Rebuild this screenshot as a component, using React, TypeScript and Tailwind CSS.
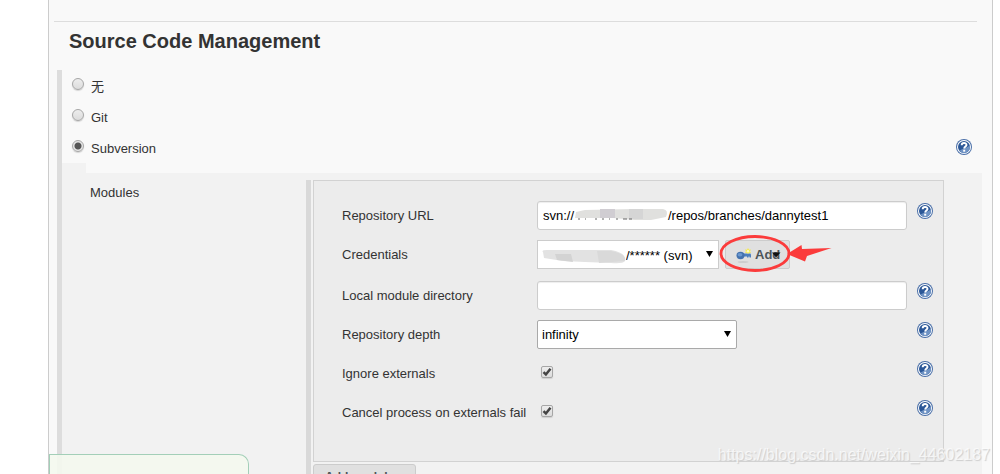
import type { ReactNode } from "react";

function Help({ topic }: { topic: string }) {
  return (
    <button type="button" aria-label={`Help for ${topic}`} className="size-4 shrink-0">
      <svg viewBox="0 0 16 16" className="size-4">
        <circle cx="8" cy="8" r="8" fill="#4a6fa8" />
        <circle cx="8" cy="8" r="7" fill="#fff" />
        <circle cx="8" cy="8" r="6" fill="#2b5797" />
        <path d="M3.4 11.800A6 6 0 0 0 13.700 6C12 9 8 8.500 3.400 11.800Z" fill="#6f93c4" />
        <path
          d="M5.700 6.300C5.700 3.300 10.500 3.300 10.500 6C10.500 7.700 8.200 7.500 8.200 9.600"
          fill="none"
          stroke="#fff"
          strokeWidth="1.900"
        />
        <rect x="7.200" y="10.700" width="2" height="2" fill="#fff" />
      </svg>
    </button>
  );
}

function Scm({ id, label, checked = false }: { id: string; label: string; checked?: boolean }) {
  return (
    <div className="flex items-start h-[31px]">
      <input
        type="radio"
        name="scm"
        id={id}
        defaultChecked={checked}
        className="appearance-none size-3 rounded-full border border-[#a6a6a6] bg-linear-to-b from-[#ededed] to-[#dcdcdc] shadow-[0_1px_1px_#d4d4d4] checked:bg-[radial-gradient(circle,#555_0_3px,#e6e6e6_4px)]"
      />
      <label htmlFor={id} className="ml-[7px] leading-[18px]">
        {label}
      </label>
    </div>
  );
}

function Row({ id, label, help = true, children }: { id: string; label: string; help?: boolean; children: ReactNode }) {
  return (
    <div className="grid grid-cols-[185px_1fr_16px] gap-x-2.5 items-start">
      <label htmlFor={id} className="leading-[29px] whitespace-nowrap">
        {label}
      </label>
      <div className="flex items-start min-h-[29px]">{children}</div>
      <div className="flex pt-0.5">{help && <Help topic={label} />}</div>
    </div>
  );
}

function Check({ id }: { id: string }) {
  return (
    <span className="relative flex ml-1 mt-[7px]">
      <input
        type="checkbox"
        id={id}
        defaultChecked
        className="peer appearance-none size-3 rounded-xs border border-[#a6a6a6] bg-linear-to-b from-[#ededed] to-[#dcdcdc] shadow-[0_1px_1px_#d0d0d0]"
      />
      <svg viewBox="0 0 12 12" className="absolute inset-0 size-3 pointer-events-none hidden peer-checked:block">
        <path d="M2.500 6.200L4.900 8.500L9.500 2.800" fill="none" stroke="#444" strokeWidth="2.500" />
      </svg>
    </span>
  );
}

function Arrow() {
  return (
    <svg viewBox="0 0 7 6" className="absolute right-1.5 top-[11px] w-[7px] h-1.5 pointer-events-none">
      <path d="M0 0H7L3.500 6Z" fill="#000" />
    </svg>
  );
}

const field = "w-full h-[29px] rounded-[3px] border border-[#ccc] bg-white px-[5px] text-black shadow-[inset_0_1px_1px_#eee]";

// the host part is masked, so it is only blank space under the smudge
const url = "svn://" + "\u00a0".repeat(26) + "/repos/branches/dannytest1";

export default function App() {
  return (
    <div className="relative h-screen overflow-hidden bg-white pl-12 pr-[7px] text-[13px] text-[#333] font-['Liberation_Sans','Noto_Sans_CJK_SC',sans-serif]">
      <main className="min-h-full border-x border-[#ccc] bg-[#f9f9f9] pt-[21px]">
        <hr className="ml-[5px] mr-[15px] border-[#ddd]" />
        <h1 className="ml-5 mt-[7px] text-xl leading-6 font-bold">Source Code Management</h1>

        <section className="ml-2 mr-2.5 mt-[17px] border-l-[5px] border-[#ddd]">
          <div className="flex items-start pt-2 pl-2.5 pr-2.5">
            <fieldset className="grow">
              <Scm id="none" label="无" />
              <Scm id="git" label="Git" />
              <Scm id="svn" label="Subversion" checked />
            </fieldset>
            <div className="flex self-end pb-4">
              <Help topic="Subversion" />
            </div>
          </div>

          <div className="w-6 h-2.5 -mt-2 bg-[#f2f2f2]" />
          <div className="flex bg-[#f2f2f2] min-h-[320px] pt-[7px] pr-[38px]">
            <h2 className="w-[244px] shrink-0 pl-7 pt-[5px] leading-4">Modules</h2>
            <div className="grow border-l-[5px] border-[#d9d9d9] pl-0.5">
              <div className="flex flex-col gap-2.5 border border-[#d2d2d2] bg-[#ececec] pt-5 pb-[34px] pl-7 pr-2.5">
                <Row id="url" label="Repository URL">
                  <div className="relative w-full">
                    <input id="url" type="text" defaultValue={url} className={field} />
                    <svg viewBox="0 0 98 14" className="absolute left-9 top-[7px] w-[98px] h-3.5 pointer-events-none">
                      <path d="M3 4L12 2L60 1L90 1Q96 2 93 9L78 12L62 12L40 10L2 10Z" fill="#e0e0de" />
                      <path d="M27 1H42V10H27Z" fill="#d0cdd2" />
                      <path d="M56 1H70V11H56Z" fill="#d5d5d5" />
                      <path d="M5 11h2M12 11h1M22 11h2M29 11h2M36 11h1M43 11h2M50 11h4M56 11h3" stroke="#666" />
                    </svg>
                  </div>
                </Row>
                <div className="pb-0.5">
                  <Row id="cred" label="Credentials" help={false}>
                    <div className="relative w-[182px]">
                      <select
                        id="cred"
                        className="appearance-none w-full h-[29px] border border-[#ccc] bg-white pl-[88px] pt-0.5 text-black"
                      >
                        <option>/****** (svn)</option>
                      </select>
                      <svg viewBox="0 0 88 16" className="absolute left-1 top-[9px] w-[88px] h-4 pointer-events-none">
                        <path d="M2 3Q0 1 6 1L70 1Q86 4 84 12Q82 15 70 14L44 13L22 12L3 9Z" fill="#e2e2e2" />
                        <path d="M14 5L30 5L32 13L16 11Z" fill="#d3d3d3" />
                        <path d="M56 2L70 2Q86 5 84 12L58 14Z" fill="#d9d9d9" />
                      </svg>
                      <Arrow />
                    </div>
                    <div className="relative ml-1.5">
                      <button
                        type="button"
                        className="flex items-center w-[65px] h-[29px] rounded-xs border border-[#ccc] bg-[#e0e0e0] pl-2.5 font-bold text-[#4d5459]"
                      >
                        <svg viewBox="0 0 16 16" className="size-4 mr-[3px] shrink-0">
                          <ellipse cx="7" cy="15" rx="5.500" ry="0.800" fill="#c6c6c6" />
                          <path d="M6 6.500H14.500L15 8V10.500H13.500V9.500H12.500V10.500H11V9.500H6Z" fill="#4d7fbe" />
                          <ellipse cx="4.500" cy="8.500" rx="4" ry="3.700" fill="#4472ae" />
                          <ellipse cx="4" cy="7.700" rx="2.400" ry="1.800" fill="#6c98cf" />
                          <path
                            d="M12 1L13 2.700L15 2.500L14 4.200L15 6L13 5.700L12 7L11 5.700L9 6L10 4.200L9 2.500L11 2.700Z"
                            fill="#f6ea4a"
                          />
                          <circle cx="12" cy="4.200" r="1.300" fill="#fffbc0" />
                        </svg>
                        Add
                      </button>
                      <svg viewBox="0 0 115 40" className="absolute -left-2 -top-2 w-[115px] h-10 pointer-events-none">
                        <path d="M55 20.500H63.500L59 25.500Z" fill="#111" />
                        <ellipse cx="38" cy="21.500" rx="34" ry="17" fill="none" stroke="#fb3b3b" strokeWidth="2.800" />
                        <path d="M70 22L84.500 13L85 17L114.500 16L90 24L88 29.500Z" fill="#fb3b3b" />
                      </svg>
                    </div>
                  </Row>
                </div>
                <Row id="local" label="Local module directory">
                  <input id="local" type="text" className={field} />
                </Row>
                <Row id="depth" label="Repository depth">
                  <div className="relative w-[200px]">
                    <select
                      id="depth"
                      className="appearance-none w-full h-[29px] rounded-xs border border-[#a9a9a9] bg-white pl-1 text-black"
                    >
                      <option>infinity</option>
                    </select>
                    <Arrow />
                  </div>
                </Row>
                <Row id="ignore" label="Ignore externals">
                  <Check id="ignore" />
                </Row>
                <Row id="cancel" label="Cancel process on externals fail">
                  <Check id="cancel" />
                </Row>
              </div>
              <button
                type="button"
                className="block mt-0.5 h-[26px] rounded-[3px] border border-[#ccc] bg-[#e0e0e0] px-[11px] text-xs font-bold text-[#4d5459]"
              >
                Add module...
              </button>
            </div>
          </div>
        </section>
      </main>

      {/* save bar and watermark float over the form */}
      <div className="absolute left-[49px] bottom-0 w-[200px] h-5 rounded-tr-[10px] border border-b-0 border-[#a3cfb8] bg-[#f4f8ee]/90" />
      <p className="absolute right-2.5 bottom-[9px] text-base leading-5 text-white/70 [text-shadow:1px_1px_1px_#ccc]">
        https://blog.csdn.net/weixin_44602187
      </p>
    </div>
  );
}
